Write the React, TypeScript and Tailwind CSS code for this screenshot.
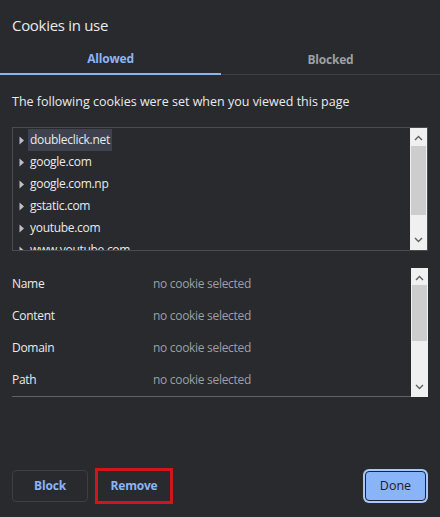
const sites = [
  'doubleclick.net',
  'google.com',
  'google.com.np',
  'gstatic.com',
  'youtube.com',
  'www.youtube.com',
];

const fields = ['Name', 'Content', 'Domain', 'Path'];

function Chevron({ up }: { up?: boolean }) {
  return (
    <svg width="9" height="6" viewBox="0 0 9 6" className="shrink-0">
      <path
        d={up ? 'M1 5 L4.5 1.5 L8 5' : 'M1 1 L4.5 4.5 L8 1'}
        fill="none"
        stroke="#606060"
        strokeWidth="1.4"
      />
    </svg>
  );
}

function Scrollbar({ thumbTop, thumbHeight }: { thumbTop: number; thumbHeight: number }) {
  return (
    <div className="relative w-[17px] h-full bg-[#f0f0f0] flex flex-col items-center justify-between py-[7px]">
      <Chevron up />
      <div
        className="absolute left-[1px] right-[1px] bg-[#cdcdcd]"
        style={{ top: thumbTop, height: thumbHeight }}
      />
      <Chevron />
    </div>
  );
}

function Caret() {
  return (
    <svg width="6" height="9" viewBox="0 0 6 9" className="shrink-0">
      <path d="M0.5 0.5 L5 4.5 L0.5 8.5 Z" fill="#bdc1c6" />
    </svg>
  );
}

export default function App() {
  return (
    <div
      className="w-[440px] h-[517px] bg-[#292a2d] flex flex-col text-[#e8eaed] overflow-hidden"
      style={{ fontFamily: '"Open Sans", "Noto Sans", sans-serif' }}
    >
      <h1 className="px-3 pt-[14px] text-[15px] leading-[22px] tracking-[-0.3px] text-[#e8eaed]">
        Cookies in use
      </h1>

      <div className="mt-[8px] flex h-[31px]">
        <div className="w-[221px] flex items-center justify-center border-b-2 border-[#8ab4f8] text-[12px] tracking-[-0.2px] font-bold text-[#8ab4f8]">
          Allowed
        </div>
        <div className="flex-1 flex items-center justify-center border-b border-[#3c4043] text-[12px] tracking-[-0.2px] font-bold text-[#9aa0a6] pt-[1px]">
          Blocked
        </div>
      </div>

      <p className="px-3 mt-[18px] text-[12.5px] leading-[18px]">
        The following cookies were set when you viewed this page
      </p>

      <div className="mx-3 mt-[16px] h-[124px] border border-[#4a4c50] flex">
        <ul className="flex-1 overflow-hidden pt-[1px]">
          {sites.map((site, i) => (
            <li
              key={site}
              className="h-[22px] flex items-center pl-[6px] gap-[3px] text-[12px] tracking-[-0.3px]"
            >
              <Caret />
              <span className={`px-[2px] h-[22px] flex items-center ${i === 0 ? 'bg-[#3d424e]' : ''}`}>
                {site}
              </span>
            </li>
          ))}
        </ul>
        <Scrollbar thumbTop={18} thumbHeight={69} />
      </div>

      <div className="ml-3 mr-3 mt-[17px] h-[129px] flex">
        <div className="flex-1 border-b border-[#5f6368]">
          {fields.map((field) => (
            <div key={field} className="h-[32px] flex items-center text-[12px] tracking-[-0.3px]">
              <span className="w-[141px]">{field}</span>
              <span className="text-[#9aa0a6]">no cookie selected</span>
            </div>
          ))}
        </div>
        <Scrollbar thumbTop={17} thumbHeight={56} />
      </div>

      <div className="mt-auto mb-[13px] px-3 flex items-center">
        <button className="w-[76px] h-[32px] rounded-[4px] border border-[#3c4043] text-[12px] tracking-[-0.2px] font-bold text-[#8ab4f8]">
          Block
        </button>
        <button className="ml-[7px] w-[78px] h-[36px] border-[3px] border-[#d0161b] text-[12px] tracking-[-0.2px] font-bold text-[#8ab4f8]">
          Remove
        </button>
        <button className="ml-auto mr-[2px] w-[61px] h-[30px] rounded-[4px] bg-[#8ab4f8] border border-[#1d2333] ring-2 ring-[#a8c7fa] text-[12.5px] text-[#202124]">
          Done
        </button>
      </div>
    </div>
  );
}
